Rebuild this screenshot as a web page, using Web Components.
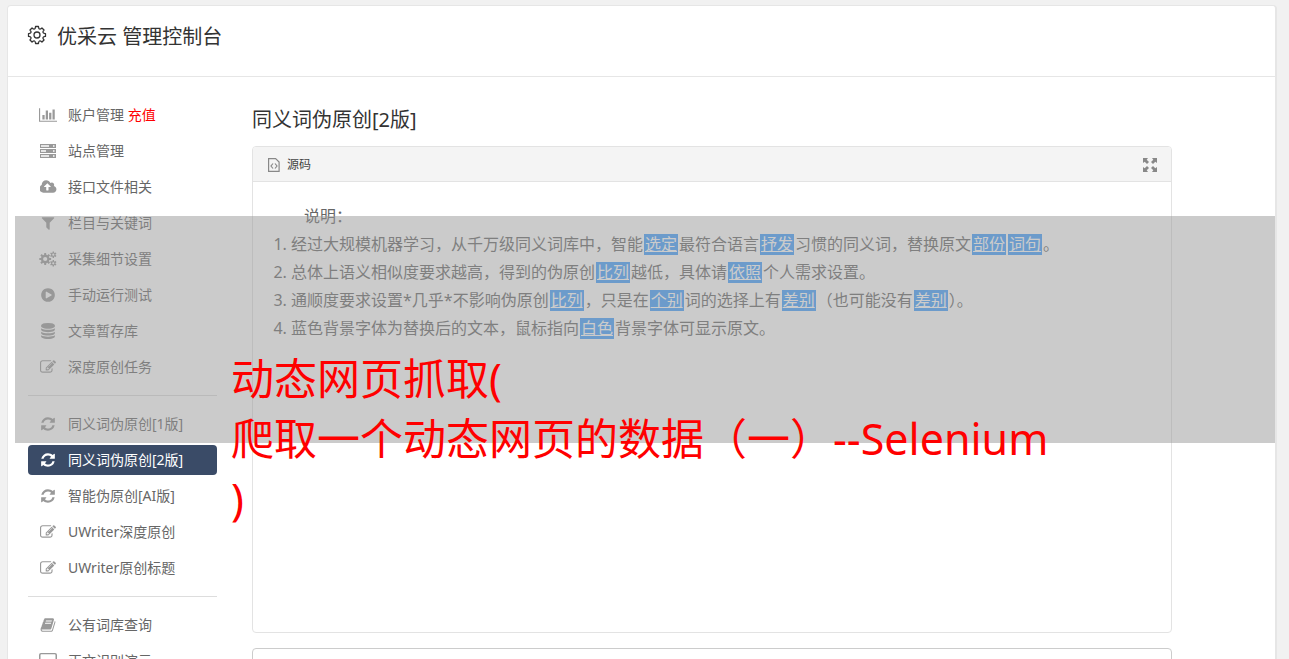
<!DOCTYPE html>
<html lang="zh-CN">
<head>
<meta charset="utf-8">
<meta name="viewport" content="width=device-width, initial-scale=1">
<title>优采云 管理控制台</title>
<style>
html{scrollbar-width:none}
body{margin:0;background:#f1f1f1;color:#666;font:14px/20px "Noto Sans","Noto Sans CJK SC",sans-serif}
</style>
</head>
<body>
<console-app></console-app>
<script>
const gear = (cx, cy, teeth, r1, r2, hole) => {
  const pts = [];
  for (let i = 0; i < teeth; i++) {
    [[-.32, r1], [-.2, r2], [.2, r2], [.32, r1]].forEach(([o, r]) => {
      const a = (i + o) * 2 * Math.PI / teeth;
      pts.push((cx + r * Math.sin(a)).toFixed(1) + ' ' + (cy - r * Math.cos(a)).toFixed(1));
    });
  }
  return `M${pts.join('L')}zM${cx - hole} ${cy}a${hole} ${hole} 0 1 0 ${2 * hole} 0a${hole} ${hole} 0 1 0 ${-2 * hole} 0z`;
};
const scallop = () => {
  let d = '';
  const n = 8, at = (a, r) => (10 + r * Math.sin(a)).toFixed(2) + ' ' + (10 - r * Math.cos(a)).toFixed(2);
  for (let i = 0; i < n; i++) {
    const a = i * 2 * Math.PI / n;
    d += `${i ? 'L' : 'M'}${at(a - .17, 8.6)}L${at(a + .17, 8.6)}Q${at(a + .39, 4.6)} ${at(a + .615, 8.6)}`;
  }
  return d + 'z';
};
/* Each icon: viewBox width, viewBox height, drawn width, drawn height, markup */
const ICONS = {
  gear: [20, 20, 20, 20, `<path d="${scallop()}" fill="none" stroke="currentColor" stroke-width="1.3" stroke-linejoin="round"/><circle cx="10" cy="10" r="3" fill="none" stroke="currentColor" stroke-width="1.3"/>`],
  chart: [2048, 1792, 18, 16, '<path d="M640 896v512h-256v-512h256zm384-512v1024h-256v-1024h256zm1024 1152v128h-2048v-1536h128v1408h1920zm-640-896v768h-256v-768h256zm384-384v1152h-256v-1152h256z"/>'],
  server: [16, 16, 16, 16, '<path fill-rule="evenodd" d="M0 1h16v4H0zM1 2.3v1.4h8V2.300zM13 2.300v1.400h1.500V2.300zM0 6h16v4H0zM1 7.300v1.400h5V7.300zM13 7.300v1.400h1.500V7.300zM0 11h16v4H0zM1 12.300v1.400h8v-1.400zM13 12.300v1.400h1.500v-1.400z"/>'],
  cloud: [1920, 1792, 17, 16, '<path d="M1216 864q0-14-9-23l-352-352q-9-9-23-9t-23 9l-351 351q-10 12-10 24 0 14 9 23t23 9h224v352q0 13 9.500 22.500t22.500 9.500h192q13 0 22.500-9.500t9.500-22.500v-352h224q13 0 22.500-9.500t9.500-22.500zm640 288q0 159-112.500 271.500t-271.500 112.500h-1088q-185 0-316.500-131.500t-131.500-316.500q0-130 70-240t188-165q-2-30-2-43 0-212 150-362t362-150q156 0 285.500 87t188.500 231q71-62 166-62 106 0 181 75t75 181q0 76-41 138 130 31 213.500 135.500t83.500 238.500z"/>'],
  filter: [1792, 1792, 16, 16, '<path d="M1595 295q17 41-14 70l-493 493v742q0 42-39 59-13 5-25 5-27 0-45-19l-256-256q-19-19-19-45v-486l-493-493q-31-29-14-70 17-39 59-39h1280q42 0 59 39z"/>'],
  cogs: [18, 16, 18, 16, `<path fill-rule="evenodd" d="${gear(6.2, 8, 8, 4.3, 6, 2.1)}${gear(14.3, 3.7, 6, 2.2, 3.3, 1.1)}${gear(14.3, 12.3, 6, 2.2, 3.3, 1.1)}"/>`],
  play: [1792, 1792, 16, 16, '<path d="M896 128q209 0 385.500 103t279.500 279.500 103 385.500-103 385.500-279.500 279.500-385.500 103-385.500-103-279.500-279.500-103-385.500 103-385.500 279.500-279.500 385.500-103zm384 823q32-18 32-55t-32-55l-544-320q-31-19-64-1-32 19-32 56v640q0 37 32 56 16 8 32 8 17 0 32-9z"/>'],
  database: [1792, 1792, 16, 16, '<path d="M896 768q237 0 443-43t325-127v170q0 69-103 128t-280 93.500-385 34.500-385-34.500-280-93.500-103-128v-170q119 84 325 127t443 43zm0 768q237 0 443-43t325-127v170q0 69-103 128t-280 93.500-385 34.500-385-34.500-280-93.500-103-128v-170q119 84 325 127t443 43zm0-384q237 0 443-43t325-127v170q0 69-103 128t-280 93.500-385 34.500-385-34.500-280-93.500-103-128v-170q119 84 325 127t443 43zm0-1152q208 0 385 34.500t280 93.500 103 128v128q0 69-103 128t-280 93.500-385 34.500-385-34.500-280-93.500-103-128v-128q0-69 103-128t280-93.500 385-34.500z"/>'],
  edit: [1792, 1792, 16, 16, '<path d="M888 1184l116-116-152-152-116 116v56h96v96h56zm440-720q-16-16-33 1l-350 350q-17 17-1 33t33-1l350-350q17-17 1-33zm80 594v190q0 119-84.500 203.500t-203.500 84.500h-832q-119 0-203.500-84.500t-84.500-203.500v-832q0-119 84.500-203.500t203.500-84.500h832q63 0 117 25 15 7 18 23 3 17-9 29l-49 49q-14 14-32 8-23-6-45-6h-832q-66 0-113 47t-47 113v832q0 66 47 113t113 47h832q66 0 113-47t47-113v-126q0-13 9-22l64-64q15-15 35-7t20 29zm-96-738l288 288-672 672h-288v-288zm444 132l-92 92-288-288 92-92q28-28 68-28t68 28l152 152q28 28 28 68t-28 68z"/>'],
  refresh: [1792, 1792, 16, 16, '<path d="M1639 1056q0 5-1 7-64 268-268 434.500t-478 166.500q-146 0-282.500-55t-243.500-157l-129 129q-19 19-45 19t-45-19-19-45v-448q0-26 19-45t45-19h448q26 0 45 19t19 45-19 45l-137 137q71 66 161 102t187 36q134 0 250-65t186-179q11-17 53-117 8-23 30-23h192q13 0 22.500 9.500t9.500 22.500zm25-800v448q0 26-19 45t-45 19h-448q-26 0-45-19t-19-45 19-45l138-138q-148-137-349-137-134 0-250 65t-186 179q-11 17-53 117-8 23-30 23h-199q-13 0-22.500-9.500t-9.500-22.500v-7q65-268 270-434.500t480-166.500q146 0 284 55.500t245 156.500l130-129q19-19 45-19t45 19 19 45z"/>'],
  book: [1792, 1792, 16, 16, '<path d="M1703 478q40 57 18 129l-275 906q-19 64-76.500 107.500t-122.500 43.500h-923q-77 0-148.500-53.500t-99.500-131.500q-24-67-2-127 0-4 3-27t4-37q1-8-3-21.500t-3-19.500q2-11 8-21t16.500-23.500 16.500-23.500q23-38 45-91.500t30-91.500q3-10 .5-30t-.5-28q3-11 17-28t17-23q21-36 42-92t25-90q1-9-2.500-32t.5-28q4-13 22-30.500t22-22.500q19-26 42.500-84.500t27.500-96.500q1-8-3-25.500t-2-26.500q2-8 9-18t18-23 17-21q8-12 16.500-30.500t15-35 16-36 19.500-32 26.500-23.500 36-11.500 47.500 5.500l-1 3q38-9 51-9h761q74 0 114 56t18 130l-274 906q-36 119-71.500 153.500t-128.500 34.500h-869q-27 0-38 15-11 16-1 43 24 70 144 70h923q29 0 56-15.500t35-41.500l300-987q7-22 5-57 38 15 59 43zm-1064 2q-4 13 2 22.500t20 9.500h608q13 0 25.500-9.500t16.500-22.500l21-64q4-13-2-22.500t-20-9.500h-608q-13 0-25.500 9.500t-16.500 22.500zm-83 256q-4 13 2 22.500t20 9.500h608q13 0 25.500-9.500t16.500-22.500l21-64q4-13-2-22.500t-20-9.500h-608q-13 0-25.500 9.500t-16.500 22.500z"/>'],
  screen: [18, 16, 18, 16, '<path fill-rule="evenodd" d="M2 0h14q2 0 2 2v9q0 2-2 2h-4v2H6v-2H2q-2 0-2-2V2q0-2 2-2zM1.500 2v7h15V2q0-.7-.7-.7H2.200q-.7 0-.7.7z"/>'],
  code: [12, 14, 12, 14, '<path fill="none" stroke="currentColor" stroke-width="1.2" d="M.6.600h7l3.500 3.500v9.300H.6zM5 5.500L3 8l2 2.500M7 5.500L9 8l-2 2.500"/>'],
  expand: [14, 14, 14, 14, '<path d="M0 0h5L3.700 1.700l2.300 2.300-2 2-2.300-2.300L0 5zM14 0v5l-1.700-1.300L10 6 8 4l2.300-2.300L9 0zM0 14V9l1.700 1.300L4 8l2 2-2.300 2.300L5 14zM14 14H9l1.300-1.700L8 10l2-2 2.300 2.300L14 9z"/>']
};

const define = (name, html) => customElements.define(name, class extends HTMLElement {
  constructor() {
    super();
    const t = document.createElement('template');
    t.innerHTML = html;
    this.attachShadow({mode: 'open'}).append(t.content.cloneNode(true));
  }
});

customElements.define('ui-icon', class extends HTMLElement {
  connectedCallback() {
    if (this.shadowRoot) return;
    const [vw, vh, w, h, body] = ICONS[this.getAttribute('name')];
    this.attachShadow({mode: 'open'}).innerHTML = `<style>:host{display:inline-flex;flex:none}svg{display:block;fill:currentColor}</style>
      <svg viewBox="0 0 ${vw} ${vh}" width="${w}" height="${h}" aria-hidden="true">${body}</svg>`;
  }
});

customElements.define('nav-item', class extends HTMLElement {
  connectedCallback() {
    if (this.shadowRoot) return;
    this.attachShadow({mode: 'open'}).innerHTML = `<style>
      :host{display:block}
      a{display:flex;align-items:center;gap:10px;height:30px;padding:0 10px;border-radius:4px;color:#666;text-decoration:none;white-space:nowrap}
      .icon{display:flex;justify-content:center;width:20px;color:#999;flex:none}
      :host([active]) a{background:#3a4b67;color:#fff}
      :host([active]) .icon{color:#fff}
      ::slotted(b){color:#f00;font-weight:400}
    </style><a href="#"><span class="icon"><ui-icon name="${this.getAttribute('icon')}"></ui-icon></span><span><slot></slot></span></a>`;
  }
});

define('side-nav', `<style>
  :host{display:block}
  nav{display:flex;flex-direction:column;gap:6px}
  hr{width:100%;margin:7px 0;border:0;border-top:1px solid #ddd}
</style>
<nav>
  <nav-item icon="chart">账户管理 <b>充值</b></nav-item>
  <nav-item icon="server">站点管理</nav-item>
  <nav-item icon="cloud">接口文件相关</nav-item>
  <nav-item icon="filter">栏目与关键词</nav-item>
  <nav-item icon="cogs">采集细节设置</nav-item>
  <nav-item icon="play">手动运行测试</nav-item>
  <nav-item icon="database">文章暂存库</nav-item>
  <nav-item icon="edit">深度原创任务</nav-item>
  <hr>
  <nav-item icon="refresh">同义词伪原创[1版]</nav-item>
  <nav-item icon="refresh" active>同义词伪原创[2版]</nav-item>
  <nav-item icon="refresh">智能伪原创[AI版]</nav-item>
  <nav-item icon="edit">UWriter深度原创</nav-item>
  <nav-item icon="edit">UWriter原创标题</nav-item>
  <hr>
  <nav-item icon="book">公有词库查询</nav-item>
  <nav-item icon="screen">正文识别演示</nav-item>
</nav>`);

define('page-header', `<style>
  :host{display:block;border-bottom:1px solid #e6e6e6}
  header{display:flex;align-items:flex-start;gap:10px;padding:16px 19px 24px;color:#333}
  ui-icon{margin-top:3px}
  h1{margin:0;font-size:20px;line-height:30px;font-weight:400}
</style>
<header><ui-icon name="gear"></ui-icon><h1><slot></slot></h1></header>`);

define('swap-word', `<style>
  :host{display:inline-block;margin:0 1px;padding:0 1px;background:#409eff;color:#fff;line-height:21px;text-decoration:underline}
</style><slot></slot>`);

define('editor-panel', `<style>
  :host{display:block;border:1px solid #e3e3e3;border-radius:4px}
  .bar{display:flex;justify-content:space-between;align-items:center;height:32px;padding:2px 14px 0 15px;background:#f4f4f4;border-bottom:1px solid #e3e3e3;border-radius:3px 3px 0 0}
  button{display:flex;align-items:center;gap:7px;margin:0;padding:0;border:0;background:none;color:#888;font:inherit;font-size:12px}
  button span{color:#444}
  .body{min-height:430px;padding:20px 20px 0 21px;font-size:16px;line-height:28px}
</style>
<div class="bar">
  <button type="button"><ui-icon name="code"></ui-icon><span>源码</span></button>
  <button type="button" aria-label="全屏"><ui-icon name="expand"></ui-icon></button>
</div>
<div class="body"><slot></slot></div>`);

define('headline-overlay', `<style>
  :host{position:absolute;top:216px;left:15px;right:14px;height:227px;background:rgba(151,151,151,.5);pointer-events:none}
  p{margin:0;padding:133px 0 0 216px;color:#f00;font-size:43px;line-height:60px;white-space:nowrap}
</style><p><slot></slot></p>`);

define('console-app', `<style>
  :host{display:block;position:relative;padding:5px 12px 20px 7px}
  .card{background:#fff;border:1px solid #e6e6e6;border-right-width:2px;border-radius:4px}
  .layout{display:grid;grid-template-columns:189px minmax(0,920px);gap:35px;padding:23px 20px 40px}
  h2{margin:6px 0 12px;font-size:20px;line-height:28px;font-weight:400;color:#333}
  .intro{margin:0;padding-left:30px}
  ol{margin:0;padding-left:17px}
  textarea{display:block;box-sizing:border-box;width:100%;height:200px;margin-top:15px;border:1px solid #ccc;border-radius:4px;background:#fff;font:inherit;resize:none}
</style>
<div class="card">
  <page-header>优采云 管理控制台</page-header>
  <div class="layout">
    <side-nav></side-nav>
    <main>
      <h2>同义词伪原创[2版]</h2>
      <editor-panel>
        <p class="intro">说明：</p>
        <ol>
          <li>经过大规模机器学习，从千万级同义词库中，智能<swap-word>选定</swap-word>最符合语言<swap-word>抒发</swap-word>习惯的同义词，替换原文<swap-word>部份</swap-word><swap-word>词句</swap-word>。</li>
          <li>总体上语义相似度要求越高，得到的伪原创<swap-word>比列</swap-word>越低，具体请<swap-word>依照</swap-word>个人需求设置。</li>
          <li>通顺度要求设置*几乎*不影响伪原创<swap-word>比列</swap-word>，只是在<swap-word>个别</swap-word>词的选择上有<swap-word>差别</swap-word>（也可能没有<swap-word>差别</swap-word>）。</li>
          <li>蓝色背景字体为替换后的文本，鼠标指向<swap-word>白色</swap-word>背景字体可显示原文。</li>
        </ol>
      </editor-panel>
      <textarea aria-label="原文"></textarea>
    </main>
  </div>
</div>
<headline-overlay>动态网页抓取(<br>爬取一个动态网页的数据（一）--Selenium<br>)</headline-overlay>`);
</script>
</body>
</html>
